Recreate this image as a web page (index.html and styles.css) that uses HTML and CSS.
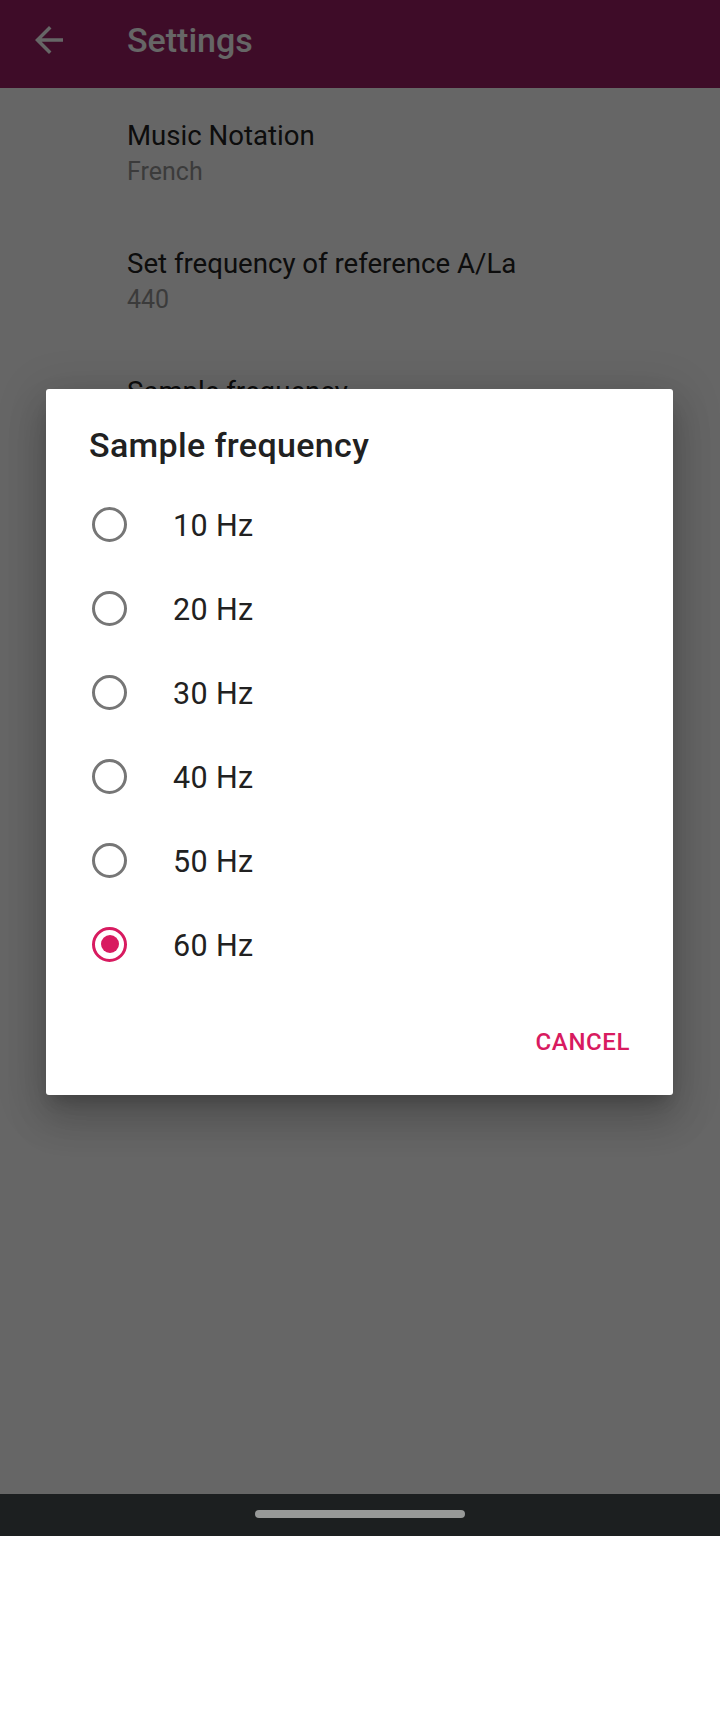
FILE: index.html
```html
<!DOCTYPE html>
<html lang="en">
<head>
<meta charset="utf-8">
<title>Settings</title>
<link rel="stylesheet" href="styles.css">
</head>
<body>
<div class="phone">
  <div class="screen">
    <header class="appbar">
      <svg class="back" viewBox="0 0 24 24" width="42" height="42" aria-hidden="true">
        <path d="M20 11H7.83l5.59-5.59L12 4l-8 8 8 8 1.41-1.41L7.83 13H20v-2z"/>
      </svg>
      <h1 class="appbar-title">Settings</h1>
    </header>
    <ul class="prefs">
      <li class="pref">
        <div class="pref-title">Music Notation</div>
        <div class="pref-summary">French</div>
      </li>
      <li class="pref">
        <div class="pref-title">Set frequency of reference A/La</div>
        <div class="pref-summary">440</div>
      </li>
      <li class="pref">
        <div class="pref-title">Sample frequency</div>
      </li>
    </ul>
    <div class="scrim"></div>
    <div class="dialog" role="dialog">
      <h2 class="dialog-title">Sample frequency</h2>
      <ul class="choices">
        <li class="choice"><span class="radio"></span><span class="choice-label">10 Hz</span></li>
        <li class="choice"><span class="radio"></span><span class="choice-label">20 Hz</span></li>
        <li class="choice"><span class="radio"></span><span class="choice-label">30 Hz</span></li>
        <li class="choice"><span class="radio"></span><span class="choice-label">40 Hz</span></li>
        <li class="choice"><span class="radio"></span><span class="choice-label">50 Hz</span></li>
        <li class="choice"><span class="radio checked"></span><span class="choice-label">60 Hz</span></li>
      </ul>
      <div class="actions">
        <span class="btn">Cancel</span>
      </div>
    </div>
  </div>
  <div class="navbar"><span class="handle"></span></div>
  <div class="below"></div>
</div>
</body>
</html>
```

FILE: styles.css
```css
* { box-sizing: border-box; }
html, body {
  margin: 0;
  padding: 0;
  background: #ffffff;
}
body {
  font-family: Roboto, "Noto Sans", "Liberation Sans", sans-serif;
  width: 720px;
  height: 1712px;
  overflow: hidden;
}
.phone {
  width: 720px;
  height: 1712px;
  display: flex;
  flex-direction: column;
}
.screen {
  position: relative;
  height: 1494px;
  flex: none;
  background: #ffffff;
}
.appbar {
  height: 88px;
  background: #9b1e64;
  display: flex;
  align-items: center;
  padding: 0 0 9px 28px;
}
.back {
  flex: none;
  fill: #ffffff;
  margin-top: 1px;
}
.appbar-title {
  margin: 0 0 0 57px;
  font-size: 34px;
  font-weight: 500;
  color: #ffffff;
  line-height: 40px;
}
.prefs {
  list-style: none;
  margin: 0;
  padding: 0;
}
.pref {
  padding: 30px 0 27px 127px;
}
.pref-title {
  font-size: 27.6px;
  line-height: 36px;
  color: #222222;
}
.pref-summary {
  margin-top: 1px;
  font-size: 25px;
  line-height: 34px;
  color: #959595;
}
.scrim {
  position: absolute;
  inset: 0;
  background: rgba(0, 0, 0, 0.6);
}
.dialog {
  position: absolute;
  left: 46px;
  top: 389px;
  width: 627px;
  background: #ffffff;
  border-radius: 3px;
  padding: 36px 0 37px;
  box-shadow: 0 11px 15px -7px rgba(0,0,0,0.2), 0 24px 38px 3px rgba(0,0,0,0.14), 0 9px 46px 8px rgba(0,0,0,0.12);
}
.dialog-title {
  margin: 0 43px;
  font-size: 34px;
  font-weight: 500;
  line-height: 40px;
  letter-spacing: 0.35px;
  color: #212121;
}
.choices {
  list-style: none;
  margin: 17px 0 0;
  padding: 0;
}
.choice {
  height: 84px;
  display: flex;
  align-items: center;
  padding-left: 46px;
}
.radio {
  flex: none;
  width: 35px;
  height: 35px;
  border: 3.4px solid #767676;
  border-radius: 50%;
  display: flex;
  align-items: center;
  justify-content: center;
}
.radio.checked {
  border-color: #d81b60;
}
.radio.checked::after {
  content: "";
  width: 18px;
  height: 18px;
  border-radius: 50%;
  background: #d81b60;
}
.choice-label {
  margin-left: 46px;
  padding-top: 3px;
  font-size: 30.5px;
  line-height: 40px;
  letter-spacing: 0.35px;
  color: #212121;
}
.actions {
  margin-top: 40px;
  display: flex;
  justify-content: flex-end;
  padding-right: 43px;
}
.btn {
  font-size: 24px;
  font-weight: 500;
  line-height: 32px;
  text-transform: uppercase;
  letter-spacing: 0.6px;
  color: #d81b60;
}
.navbar {
  flex: none;
  height: 42px;
  background: #1c1f20;
  display: flex;
  justify-content: center;
  padding-top: 16px;
}
.handle {
  width: 210px;
  height: 8px;
  border-radius: 4px;
  background: #979998;
}
.below {
  flex: 1;
  background: #ffffff;
}
```
